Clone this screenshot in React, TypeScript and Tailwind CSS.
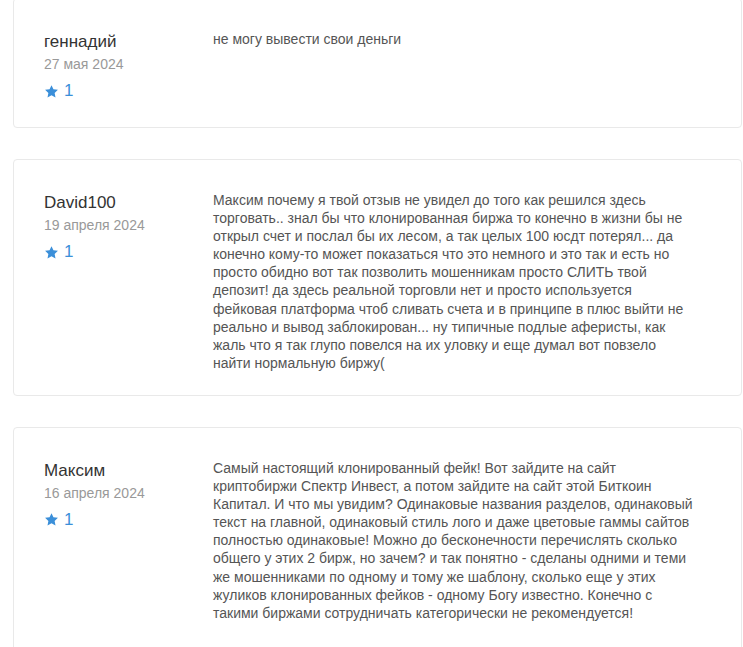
const reviews = [
  {
    name: "геннадий",
    date: "27 мая 2024",
    rating: 1,
    text: "не могу вывести свои деньги",
  },
  {
    name: "David100",
    date: "19 апреля 2024",
    rating: 1,
    text: "Максим почему я твой отзыв не увидел до того как решился здесь торговать.. знал бы что клонированная биржа то конечно в жизни бы не открыл счет и послал бы их лесом, а так целых 100 юсдт потерял... да конечно кому-то может показаться что это немного и это так и есть но просто обидно вот так позволить мошенникам просто СЛИТЬ твой депозит! да здесь реальной торговли нет и просто используется фейковая платформа чтоб сливать счета и в принципе в плюс выйти не реально и вывод заблокирован... ну типичные подлые аферисты, как жаль что я так глупо повелся на их уловку и еще думал вот повзело найти нормальную биржу(",
  },
  {
    name: "Максим",
    date: "16 апреля 2024",
    rating: 1,
    text: "Самый настоящий клонированный фейк! Вот зайдите на сайт криптобиржи Спектр Инвест, а потом зайдите на сайт этой Биткоин Капитал. И что мы увидим? Одинаковые названия разделов, одинаковый текст на главной, одинаковый стиль лого и даже цветовые гаммы сайтов полностью одинаковые! Можно до бесконечности перечислять сколько общего у этих 2 бирж, но зачем? и так понятно - сделаны одними и теми же мошенниками по одному и тому же шаблону, сколько еще у этих жуликов клонированных фейков - одному Богу известно. Конечно с такими биржами сотрудничать категорически не рекомендуется!",
  },
];

function Star() {
  return (
    <svg width="15" height="15" viewBox="0 0 24 24" className="fill-[#3b8fd9]">
      <path d="M12 1.8l3.1 6.6 7.2.9-5.3 5 1.4 7.1L12 17.9l-6.4 3.5L7 14.3l-5.3-5 7.2-.9z" />
    </svg>
  );
}

export default function App() {
  return (
    <div
      className="min-h-screen bg-white pl-[13px] pr-[1px] -mt-[2px]"
      style={{ fontFamily: '"Liberation Sans", Arial, sans-serif' }}
    >
      {reviews.map((r) => (
        <div
          key={r.name}
          className="flex border border-[#e9e9e9] rounded-[4px] bg-white pl-[30px] pr-[30px] pt-[31px] pb-[23px] mb-[31px] last:pb-[40px]"
        >
          <div className="w-[169px] shrink-0 pb-[2px]">
            <div className="text-[17px] leading-[24px] text-[#333]">{r.name}</div>
            <div className="text-[14px] leading-[20px] text-[#999]">{r.date}</div>
            <div className="mt-[6px] h-[22px] flex items-center gap-[5px] text-[#3b8fd9]">
              <Star />
              <span className="text-[17px] leading-[22px]">{r.rating}</span>
            </div>
          </div>
          <p className="w-[482px] text-[14px] leading-[18.1px] text-[#555]">{r.text}</p>
        </div>
      ))}
    </div>
  );
}
